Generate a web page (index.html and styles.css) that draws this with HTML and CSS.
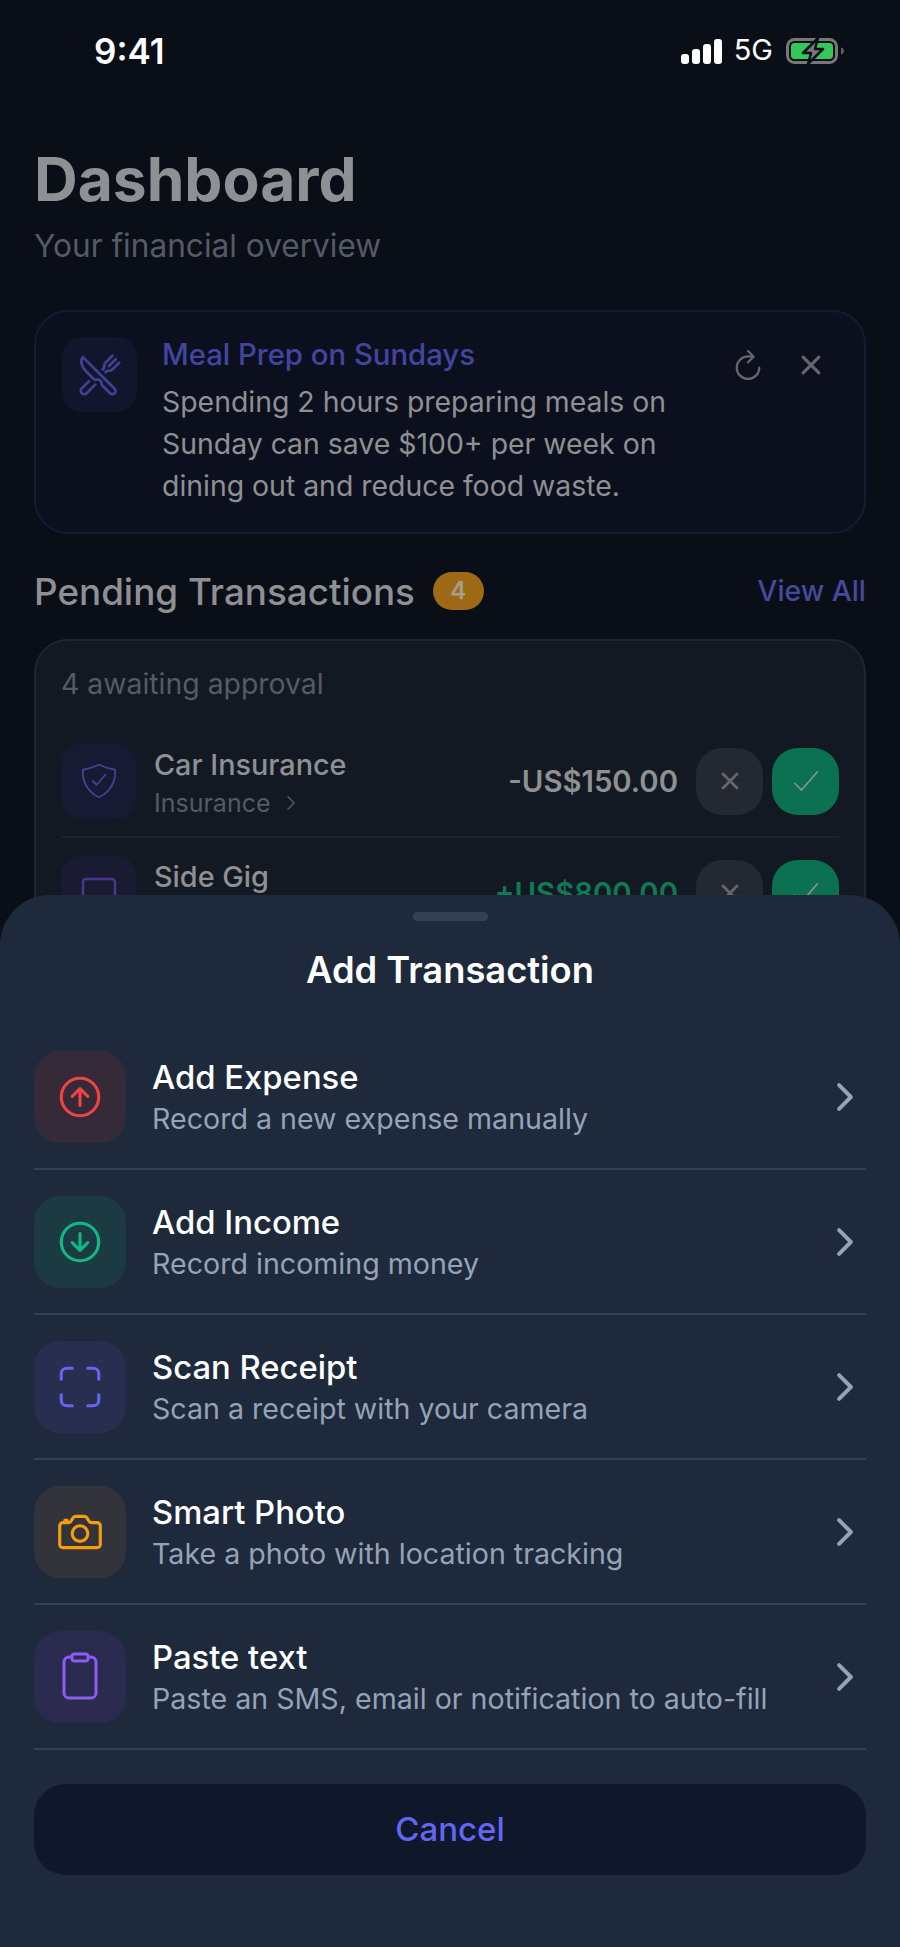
FILE: index.html
```html
<!DOCTYPE html>
<html>

<head>
  <title>Dashboard</title>
  <link rel="stylesheet" href="styles.css">
</head>

<body>

  <div class="status">
    <span class="time">9:41</span>
    <div class="status-right">
      <div class="signal"><i class="b1"></i><i class="b2"></i><i class="b3"></i><i class="b4"></i></div>
      <span class="net">5G</span>
      <svg class="battery" viewBox="0 0 58 26">
        <rect x="1.5" y="1.5" width="49" height="23" rx="7" fill="none" stroke="#77787c" stroke-width="3"/>
        <rect x="5" y="5" width="42" height="16" rx="3.5" fill="#34c759"/>
        <path d="M55 9.5c2 .6 3 2 3 3.5s-1 2.900-3 3.500z" fill="#5e5f63"/>
        <path d="M32 0 17 15h8l-3 11 15-15h-8z" fill="#77787c" stroke="#0a0e17" stroke-width="2.500" stroke-linejoin="round"/>
      </svg>
    </div>
  </div>

  <main>
    <h1>Dashboard</h1>
    <p class="subtitle">Your financial overview</p>

    <section class="tip">
      <div class="icon-box tip-icon">
        <svg viewBox="0 0 512 512" class="ion" width="44" height="44">
          <path d="M57.490 47.740l368.430 368.430a37.280 37.280 0 010 52.720h0a37.290 37.290 0 01-52.720 0l-90-91.550a32 32 0 01-9.200-22.430v-5.530a32 32 0 00-9.520-22.780l-11.620-10.730a32 32 0 00-29.800-7.440h0a48.530 48.530 0 01-46.560-12.630l-85.430-85.440C40.390 159.680 21.740 83.150 57.490 47.740z"/>
          <path d="M400 32l-77.250 77.250A64 64 0 00304 154.510v14.860a16 16 0 01-4.690 11.320L288 192M320 224l11.310-11.310a16 16 0 0111.320-4.690h14.860a64 64 0 0045.260-18.750L480 112M440 72l-80 80M200 368l-99.720 100.280a40 40 0 01-56.560 0h0a40 40 0 010-56.560L128 328"/>
        </svg>
      </div>
      <div class="tip-text">
        <h3>Meal Prep on Sundays</h3>
        <p>Spending 2 hours preparing meals on Sunday can save $100+ per week on dining out and reduce food waste.</p>
      </div>
      <div class="tip-actions">
        <svg viewBox="0 0 512 512" class="ion" width="36" height="36">
          <path d="M320 146s24.360-12-64-12a160 160 0 10160 160"/>
          <path d="M256 58l80 80-80 80"/>
        </svg>
        <svg viewBox="0 0 512 512" class="ion close-thick" width="36" height="36">
          <path d="M368 368L144 144M368 144L144 368"/>
        </svg>
      </div>
    </section>

    <div class="section-head">
      <h2>Pending Transactions</h2>
      <span class="badge">4</span>
      <a class="view-all">View All</a>
    </div>

    <section class="pending">
      <div class="awaiting">4 awaiting approval</div>

      <div class="tx tx-first">
        <div class="icon-box shield-box">
          <svg viewBox="0 0 512 512" class="ion thin" width="40" height="40">
            <path d="M336 176L225.200 304 176 255.800"/>
            <path d="M463.100 112.370C373.680 96.330 336.710 84.450 256 48c-80.710 36.450-117.680 48.330-207.100 64.370C32.700 369.130 240.580 457.790 256 464c15.420-6.210 223.300-94.870 207.100-351.630z"/>
          </svg>
        </div>
        <div class="tx-info">
          <div class="tx-name">Car Insurance</div>
          <div class="tx-cat">Insurance
            <svg viewBox="0 0 512 512" class="ion" width="22" height="22"><path d="M184 112l144 144-144 144"/></svg>
          </div>
        </div>
        <div class="tx-amount">-US$150.00</div>
        <div class="tx-btn reject">
          <svg viewBox="0 0 512 512" class="ion close-thick" width="32" height="32"><path d="M368 368L144 144M368 144L144 368"/></svg>
        </div>
        <div class="tx-btn approve">
          <svg viewBox="0 0 512 512" class="ion thin" width="36" height="36"><path d="M416 128L192 384l-96-96"/></svg>
        </div>
      </div>

      <div class="tx">
        <div class="icon-box gig-box">
          <svg viewBox="0 0 40 40" class="gig-icon" width="40" height="40"><rect x="4" y="6" width="32" height="28" rx="3"/></svg>
        </div>
        <div class="tx-info">
          <div class="tx-name">Side Gig</div>
          <div class="tx-cat">Freelance</div>
        </div>
        <div class="tx-amount income">+US$800.00</div>
        <div class="tx-btn reject">
          <svg viewBox="0 0 512 512" class="ion close-thick" width="32" height="32"><path d="M368 368L144 144M368 144L144 368"/></svg>
        </div>
        <div class="tx-btn approve">
          <svg viewBox="0 0 512 512" class="ion thin" width="36" height="36"><path d="M416 128L192 384l-96-96"/></svg>
        </div>
      </div>
    </section>
  </main>

  <div class="sheet">
    <div class="handle"></div>
    <div class="sheet-title">Add Transaction</div>

    <div class="option">
      <div class="opt-icon red">
        <svg viewBox="0 0 512 512" class="ion opt-stroke" width="50" height="50">
          <path d="M176 249.380L256 170l80 79.380M256 181.030V342"/>
          <path d="M448 256c0-106-86-192-192-192S64 150 64 256s86 192 192 192 192-86 192-192z"/>
        </svg>
      </div>
      <div class="opt-text">
        <div class="opt-name">Add Expense</div>
        <div class="opt-desc">Record a new expense manually</div>
      </div>
      <svg viewBox="0 0 512 512" class="ion chevron" width="42" height="42"><path d="M184 112l144 144-144 144"/></svg>
    </div>

    <div class="option">
      <div class="opt-icon green">
        <svg viewBox="0 0 512 512" class="ion opt-stroke" width="50" height="50">
          <path d="M176 262.620L256 342l80-79.380M256 330.970V170"/>
          <path d="M448 256c0-106-86-192-192-192S64 150 64 256s86 192 192 192 192-86 192-192z"/>
        </svg>
      </div>
      <div class="opt-text">
        <div class="opt-name">Add Income</div>
        <div class="opt-desc">Record incoming money</div>
      </div>
      <svg viewBox="0 0 512 512" class="ion chevron" width="42" height="42"><path d="M184 112l144 144-144 144"/></svg>
    </div>

    <div class="option">
      <div class="opt-icon indigo">
        <svg viewBox="0 0 512 512" class="ion opt-stroke" width="50" height="50">
          <path d="M336 448h56a56 56 0 0056-56v-56M448 176v-56a56 56 0 00-56-56h-56M176 448h-56a56 56 0 01-56-56v-56M64 176v-56a56 56 0 0156-56h56"/>
        </svg>
      </div>
      <div class="opt-text">
        <div class="opt-name">Scan Receipt</div>
        <div class="opt-desc">Scan a receipt with your camera</div>
      </div>
      <svg viewBox="0 0 512 512" class="ion chevron" width="42" height="42"><path d="M184 112l144 144-144 144"/></svg>
    </div>

    <div class="option">
      <div class="opt-icon amber">
        <svg viewBox="0 0 512 512" class="ion opt-stroke" width="50" height="50">
          <path d="M350.540 148.680l-26.620-42.060C318.310 100.080 310.620 96 302 96h-92c-8.620 0-16.310 4.080-21.920 10.620l-26.620 42.060C155.850 155.230 148.620 160 140 160H80a32 32 0 00-32 32v192a32 32 0 0032 32h352a32 32 0 0032-32V192a32 32 0 00-32-32h-59c-8.650 0-16.850-4.770-22.460-11.320z"/>
          <circle cx="256" cy="272" r="80"/>
          <path d="M124 158v-22h-24v22"/>
        </svg>
      </div>
      <div class="opt-text">
        <div class="opt-name">Smart Photo</div>
        <div class="opt-desc">Take a photo with location tracking</div>
      </div>
      <svg viewBox="0 0 512 512" class="ion chevron" width="42" height="42"><path d="M184 112l144 144-144 144"/></svg>
    </div>

    <div class="option">
      <div class="opt-icon violet">
        <svg viewBox="0 0 40 50" class="clip" width="40" height="50">
          <rect x="12" y="2" width="16" height="7" rx="2.500"/>
          <path d="M12 5H9a5 5 0 0 0-5 5v31a5 5 0 0 0 5 5h22a5 5 0 0 0 5-5V10a5 5 0 0 0-5-5h-3"/>
        </svg>
      </div>
      <div class="opt-text">
        <div class="opt-name">Paste text</div>
        <div class="opt-desc">Paste an SMS, email or notification to auto-fill</div>
      </div>
      <svg viewBox="0 0 512 512" class="ion chevron" width="42" height="42"><path d="M184 112l144 144-144 144"/></svg>
    </div>

    <div class="cancel">Cancel</div>
  </div>

</body>

</html>
```

FILE: styles.css
```css
* {
  box-sizing: border-box;
}

html,
body {
  margin: 0;
  height: 1947px;
}

body {
  position: relative;
  overflow: hidden;
  background-color: #0a0e17;
  font-family: Inter, "Liberation Sans", sans-serif;
  color: #8c8d90;
}

h1,
h2,
h3,
p {
  margin: 0;
}

.ion {
  fill: none;
  stroke: currentColor;
  stroke-width: 32;
  stroke-linecap: round;
  stroke-linejoin: round;
  flex: none;
}

.ion.thin {
  stroke-width: 24;
}

.ion.close-thick {
  stroke-width: 44;
}

/* status bar */
.status {
  height: 144px;
  padding: 32px 56px 0 94px;
  display: flex;
  justify-content: space-between;
  align-items: flex-start;
  color: #fff;
}

.time {
  font-size: 35px;
  line-height: 38px;
  font-weight: 600;
}

.status-right {
  display: flex;
  align-items: flex-end;
  height: 32px;
}

.signal {
  display: flex;
  align-items: flex-end;
  gap: 3px;
  margin-right: 12px;
}

.signal i {
  display: block;
  width: 8px;
  background-color: #fff;
  border-radius: 3px;
}

.signal .b1 { height: 10px; }
.signal .b2 { height: 15px; }
.signal .b3 { height: 20px; }
.signal .b4 { height: 25px; }

.net {
  font-size: 29px;
  line-height: 28px;
  margin-right: 13px;
}

.battery {
  width: 58px;
  height: 26px;
}

/* dashboard */
main {
  padding: 0 34px;
}

h1 {
  font-size: 60.5px;
  line-height: 70px;
  font-weight: 700;
  color: #8f9093;
}

.subtitle {
  font-size: 31.6px;
  line-height: 40px;
  color: #565a65;
  margin-top: 12px;
}

.tip {
  margin-top: 44px;
  height: 224px;
  padding: 25px 27px 25px 26px;
  display: flex;
  background-color: #0c101e;
  border: 2px solid #161a33;
  border-radius: 34px;
}

.icon-box {
  width: 75px;
  height: 75px;
  border-radius: 20px;
  display: flex;
  align-items: center;
  justify-content: center;
  flex: none;
}

.tip-icon {
  background-color: #12152c;
  color: #3f4291;
}

.tip-text {
  width: 520px;
  margin-left: 25px;
}

.tip-text h3 {
  font-size: 29.3px;
  line-height: 36px;
  font-weight: 500;
  color: #4245a0;
}

.tip-text p {
  font-size: 28.4px;
  line-height: 42px;
  color: #8f9093;
  margin-top: 8px;
}

.tip-actions {
  display: flex;
  gap: 27px;
  margin: 10px 8px 0 auto;
  color: #66676c;
}

.section-head {
  display: flex;
  align-items: center;
  margin-top: 36px;
  height: 42px;
}

h2 {
  font-size: 36.8px;
  font-weight: 500;
  color: #8f9093;
}

.badge {
  width: 51px;
  height: 38px;
  margin-left: 18px;
  border-radius: 19px;
  background-color: #9e6a16;
  color: #a79f8d;
  font-size: 24px;
  font-weight: 600;
  text-align: center;
  line-height: 38px;
}

.view-all {
  margin-left: auto;
  font-size: 28.3px;
  font-weight: 500;
  color: #464a9a;
}

.pending {
  margin-top: 27px;
  height: 400px;
  padding: 25px 25px 0;
  background-color: #131922;
  border: 2px solid #20252e;
  border-radius: 34px;
}

.awaiting {
  font-size: 28.4px;
  line-height: 36px;
  color: #565a65;
}

.tx {
  display: flex;
  align-items: center;
  height: 112px;
  border-bottom: 2px solid #1c222b;
}

.tx-first {
  margin-top: 24px;
}

.shield-box {
  background-color: #161b33;
  color: #3f4291;
}

.gig-box {
  background-color: #1a1a33;
}

.gig-icon {
  fill: none;
  stroke: #4c358f;
  stroke-width: 2.500;
}

.tx-info {
  margin-left: 18px;
  margin-top: 5px;
}

.tx-name {
  font-size: 28.8px;
  line-height: 36px;
  font-weight: 500;
  color: #8f9093;
}

.tx-cat {
  display: flex;
  align-items: center;
  gap: 9px;
  font-size: 25px;
  line-height: 34px;
  color: #565a65;
  margin-top: 3px;
}

.tx-amount {
  margin-left: auto;
  font-size: 29.3px;
  font-weight: 600;
  color: #8f9093;
}

.tx-amount.income {
  color: #0f7a53;
}

.tx-btn {
  width: 67px;
  height: 67px;
  border-radius: 26px;
  display: flex;
  align-items: center;
  justify-content: center;
  margin-left: 9px;
}

.tx-amount + .tx-btn {
  margin-left: 18px;
}

.reject {
  background-color: #232831;
  color: #66676c;
}

.approve {
  background-color: #0c7150;
  color: #8f9093;
}

/* bottom sheet */
.sheet {
  position: absolute;
  left: 0;
  right: 0;
  top: 895px;
  bottom: 0;
  padding: 17px 34px 0;
  background-color: #1e293b;
  border-radius: 50px 50px 0 0;
}

.handle {
  width: 75px;
  height: 9px;
  margin: 0 auto;
  border-radius: 5px;
  background-color: #334155;
}

.sheet-title {
  margin-top: 27px;
  font-size: 36.3px;
  line-height: 44px;
  font-weight: 600;
  color: #fff;
  text-align: center;
}

.option {
  display: flex;
  align-items: center;
  height: 145px;
  padding-top: 1px;
  border-bottom: 2px solid #334155;
}

.sheet-title + .option {
  margin-top: 33px;
}

.opt-icon {
  width: 92px;
  height: 92px;
  border-radius: 26px;
  display: flex;
  align-items: center;
  justify-content: center;
  flex: none;
}

.red { background-color: #342a38; color: #ef4444; }
.green { background-color: #1b3a42; color: #10b981; }
.indigo { background-color: #272e50; color: #6366f1; }
.amber { background-color: #33343b; color: #f59e0b; }
.violet { background-color: #2a2b4f; color: #8b5cf6; }

.clip {
  fill: none;
  stroke: currentColor;
  stroke-width: 3;
}

.opt-text {
  margin-left: 26px;
}

.opt-name {
  font-size: 32.8px;
  line-height: 40px;
  font-weight: 550;
  color: #fff;
}

.opt-desc {
  font-size: 28.6px;
  line-height: 36px;
  color: #94a3b8;
  margin-top: 4px;
}

.chevron {
  margin-left: auto;
  color: #94a3b8;
  stroke-width: 48;
}

.cancel {
  margin-top: 34px;
  height: 91px;
  border-radius: 32px;
  background-color: #0f172a;
  color: #6366f1;
  font-size: 33px;
  font-weight: 550;
  line-height: 91px;
  text-align: center;
}
```
